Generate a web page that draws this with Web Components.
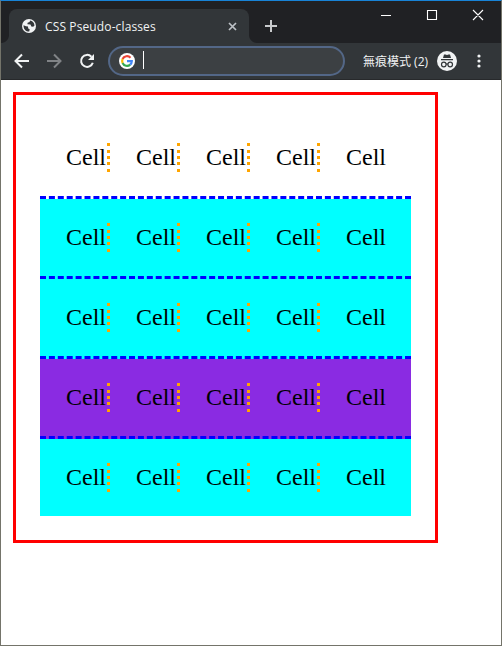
<!DOCTYPE html>
<html lang="zh-Hant">
<head>
<meta charset="utf-8">
<title>CSS Pseudo-classes</title>
<style>
body{margin:0;width:502px;height:646px;overflow:hidden}
</style>
</head>
<body>
<browser-window>
  <tab-strip slot="top">CSS Pseudo-classes</tab-strip>
  <tool-bar slot="top">無痕模式 (2)</tool-bar>
  <cell-table></cell-table>
</browser-window>
<script>
class Base extends HTMLElement{
  constructor(){super();this.attachShadow({mode:'open'}).innerHTML=this.view();}
}
customElements.define('browser-window',class extends Base{
  view(){return `<style>
:host{display:flex;flex-direction:column;box-sizing:border-box;width:502px;height:646px;background:#fff;border:1px solid #74746a;border-top-color:#1883d7}
main{padding:12px;flex:1;display:block}
</style><slot name="top"></slot><main><slot></slot></main>`}
});
customElements.define('tab-strip',class extends Base{
  view(){return `<style>
:host{display:flex;height:42px;background:#202124;font:12px "Open Sans","Noto Sans",sans-serif;color:#f1f3f4}
.tab{position:relative;width:240px;height:34px;margin:8px 0 0 8px;background:#323639;border-radius:8px 8px 0 0;display:flex;align-items:center;box-sizing:border-box;padding:0 12px 0 13px}
.tab::before,.tab::after{content:"";position:absolute;bottom:0;width:8px;height:8px}
.tab::before{left:-8px;background:radial-gradient(circle at 0 0,transparent 7.5px,#323639 8.5px)}
.tab::after{right:-8px;background:radial-gradient(circle at 100% 0,transparent 7.5px,#323639 8.5px)}
.label{margin-left:9px;flex:1;white-space:nowrap;font-size:12px;letter-spacing:.12px}
svg{display:block;flex:none}
.plus{margin:19px 0 0 16px}
.win{margin:7px 17px 0 auto}
</style>
<div class="tab"><svg width="14" height="14" viewBox="0 0 14 14"><circle cx="7" cy="7" r="7" fill="#f1f3f4"/><path d="M1.5 6.2 4 7.2 6 7.6 6.2 9.6 7.7 10.2 7.2 12.6C3.7 12.6 1.4 10 1.5 6.2ZM8 1.6 7.6 3 5.6 3.8 5.4 5.3 8.5 5.6 9.3 7.4 11.2 7.8 12.5 6.4C12.3 3.6 10.4 1.9 8 1.6Z" fill="#323639"/></svg>
<span class="label"><slot></slot></span>
<svg width="9" height="9" viewBox="0 0 9 9"><path d="M1 1 8 8M8 1 1 8" stroke="#bdc1c6" stroke-width="1.7"/></svg></div>
<svg class="plus" width="12" height="12" viewBox="0 0 12 12"><path d="M6 0V12M0 6H12" stroke="#c8cacc" stroke-width="2"/></svg>
<svg class="win" width="103" height="14" viewBox="0 0 103 14"><path d="M0 7.5H10M46.5 2.5H55.5V11.5H46.5ZM92 2 102 12M102 2 92 12" fill="none" stroke="#fff" stroke-width="1.1"/></svg>`}
});
customElements.define('tool-bar',class extends Base{
  view(){return `<style>
:host{display:flex;align-items:center;height:37px;box-sizing:border-box;background:#323639;border-bottom:1px solid #27292b;padding:0 0 0 13px;font:12px "Open Sans","Noto Sans CJK TC",sans-serif;color:#f1f3f4}
svg{display:block;flex:none}
.box{width:237px;height:30px;box-sizing:border-box;border:2px solid #536787;border-radius:15px;background:#3c4043;margin-left:12px;display:flex;align-items:center;padding-left:9px}
.caret{width:1px;height:18px;background:#fff;margin:-2px 0 0 8px}
.label{margin-left:18px;width:74px;white-space:nowrap}
.dots{margin-left:20px}
</style>
<svg width="82" height="16" viewBox="0 0 82 16"><g fill="none" stroke="#f1f3f4" stroke-width="2"><path d="M15 8H2M8 1.5 1.5 8 8 14.5"/><path stroke="#808386" d="M33 8H46M40 1.5 46.5 8 40 14.5"/><path d="M77.4 3.7A6 6 0 1 0 78.8 9.7"/></g><path d="M80 1V7H74Z" fill="#f1f3f4"/></svg>
<div class="box"><svg width="16" height="16" viewBox="0 0 16 16"><circle cx="8" cy="8" r="8" fill="#fff"/><g fill="none" stroke-width="2.2"><path stroke="#ea4335" d="M3.6 6A4.8 4.8 0 0 1 11.5 4.7"/><path stroke="#fbbc05" d="M3.6 6A4.8 4.8 0 0 0 3.6 10"/><path stroke="#34a853" d="M3.6 10A4.8 4.8 0 0 0 11.2 11.6"/><path stroke="#4285f4" d="M8 8.2H12.8A4.8 4.8 0 0 1 11.2 11.6"/></g></svg><div class="caret"></div></div>
<span class="label"><slot></slot></span>
<svg width="20" height="20" viewBox="0 0 20 20"><circle cx="10" cy="10" r="10" fill="#f1f3f4"/><path d="M6 7 7 3.5 8.5 3.5 10 4 11.5 3.5 13 3.5 14 7ZM4 8H16V9.2H4Z" fill="#323639"/><g fill="none" stroke="#323639" stroke-width="1.2"><circle cx="6.8" cy="13.5" r="2.3"/><circle cx="13.2" cy="13.5" r="2.3"/><path d="M9 13.2Q10 12.6 11 13.2"/></g></svg>
<svg class="dots" width="4" height="14" viewBox="0 0 4 14"><g fill="#f1f3f4"><circle cx="2" cy="2" r="1.6"/><circle cx="2" cy="7" r="1.6"/><circle cx="2" cy="12" r="1.6"/></g></svg>`}
});
customElements.define('table-cell',class extends Base{
  view(){return `<style>
:host{display:flex;justify-content:space-between;width:44px;height:29px;line-height:29px}
i{width:3px;background:
linear-gradient(orange,orange) 0 0/3px 3px no-repeat,
linear-gradient(orange,orange) 0 7px/3px 3px no-repeat,
linear-gradient(orange,orange) 0 13px/3px 3px no-repeat,
linear-gradient(orange,orange) 0 19px/3px 3px no-repeat,
linear-gradient(orange,orange) 0 26px/3px 3px no-repeat}
:host(:last-child) i{display:none}
</style><span><slot></slot></span><i></i>`}
});
customElements.define('table-row',class extends Base{
  view(){return `<style>
:host{display:flex;gap:26px;padding:24px 0 24px 26px;height:29px;background:var(--row,transparent)}
:host(:not(:last-child)){border-bottom:3px dashed #00f}
</style><slot></slot>`}
});
customElements.define('cell-table',class extends Base{
  view(){
    const cells='<table-cell>Cell</table-cell>'.repeat(5);
    const rows=['transparent','cyan','cyan','blueviolet','cyan'].map(c=>`<table-row style="--row:${c}">${cells}</table-row>`).join('');
    return `<style>
:host{display:block;box-sizing:border-box;width:425px;height:451px;border:3px solid red;padding:24px;font:24px "Liberation Serif",serif;color:#000}
</style>${rows}`}
});
</script>
</body>
</html>
